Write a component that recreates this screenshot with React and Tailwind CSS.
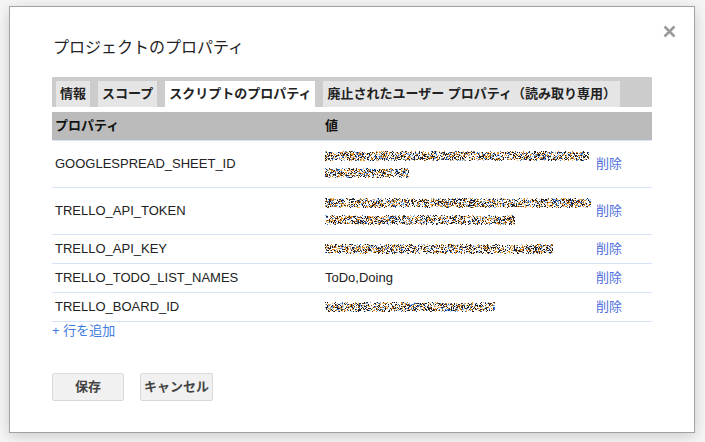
import React from 'react';

const jp = { fontFamily: '"Liberation Sans", Arial, "Noto Sans CJK JP", sans-serif' };

// deterministic noise standing in for the masked values
const rng = (seed) => {
    let s = seed;
    return () => {
        s = (s * 16807) % 2147483647;
        return (s - 1) / 2147483646;
    };
};

const NOISE_COLORS = ['#15152e', '#e08a22', '#2f6fcf', '#8fb8ea', '#6b3f14', '#f0b860', '#222222', '#15152e', '#e08a22'];

const Noise = ({ width, height = 12, seed = 7 }) => {
    const r = rng(seed);
    const dots = [];
    for (let x = 0; x < width; x++) {
        for (let y = 1; y < height - 1; y++) {
            const edge = y === 1 || y === height - 2 ? 0.25 : 0.55;
            if (r() < edge) {
                const c = NOISE_COLORS[Math.floor(r() * NOISE_COLORS.length)];
                dots.push(<rect key={x + '-' + y} x={x} y={y} width="1" height="1" fill={c} />);
            }
        }
    }
    return (
        <svg width={width} height={height} className="block">
            {dots}
        </svg>
    );
};

const rows = [
    { name: 'GOOGLESPREAD_SHEET_ID', lines: [264, 84], tall: true },
    { name: 'TRELLO_API_TOKEN', lines: [266, 190], tall: true },
    { name: 'TRELLO_API_KEY', lines: [228] },
    { name: 'TRELLO_TODO_LIST_NAMES', text: 'ToDo,Doing' },
    { name: 'TRELLO_BOARD_ID', lines: [170] },
];

const tabs = [
    { label: '情報' },
    { label: 'スコープ' },
    { label: 'スクリプトのプロパティ', active: true },
    { label: '廃止されたユーザー プロパティ（読み取り専用）' },
];

export default function App() {
    return (
        <div className="h-[442px] w-[705px] bg-[#f6f6f6] pl-[9px] pt-[6px]" style={jp}>
            <div className="relative h-[427px] w-[686px] border border-[#a2a2a2] bg-white px-[42px] shadow-[0_3px_14px_rgba(0,0,0,0.18)]">
                <button className="absolute right-[16px] top-[16px] p-[2px]">
                    <svg width="13" height="13" viewBox="0 0 13 13">
                        <path d="M1.5 1.5 L11.5 11.5 M11.5 1.5 L1.5 11.5" stroke="#9a9a9a" strokeWidth="2.6" />
                    </svg>
                </button>

                <h1 className="pl-[1px] pt-[31px] text-[16px] font-normal leading-[20px] text-[#222]">
                    プロジェクトのプロパティ
                </h1>

                <div className="mt-[19px] flex h-[30px] items-end gap-[8px] bg-[#cccccc] px-[4px]">
                    {tabs.map((t) => (
                        <div
                            key={t.label}
                            className={
                                'flex h-[26px] items-center px-[4px] text-[13px] font-bold text-[#222] ' +
                                (t.active ? 'bg-white' : 'bg-[#e5e5e5]')
                            }
                        >
                            {t.label}
                        </div>
                    ))}
                </div>

                <div className="mt-[5px] flex h-[29px] items-center border-b border-[#d4e3f5] bg-[#bbbbbb] text-[13px] font-bold text-[#111]">
                    <div className="w-[273px] pl-[3px]">プロパティ</div>
                    <div className="pl-0">値</div>
                </div>

                {rows.map((row, i) => (
                    <div
                        key={row.name}
                        className={
                            'flex items-center border-b border-[#d4e3f5] text-[13px] text-[#222] ' +
                            (row.tall ? 'h-[47px]' : 'h-[29px]')
                        }
                    >
                        <div className="w-[273px] pl-[3px]">{row.name}</div>
                        <div className="flex w-[271px] flex-col gap-[5px]">
                            {row.text ? (
                                <span>{row.text}</span>
                            ) : (
                                row.lines.map((w, j) => <Noise key={j} width={w} seed={i * 31 + j * 7 + 3} />)
                            )}
                        </div>
                        <a className="text-[13px] text-[#5070dc]">削除</a>
                    </div>
                ))}

                <div className="mt-[1px] text-[13px] leading-[16px] text-[#3d7be0]">+ 行を追加</div>

                <div className="mt-[34px] flex gap-[16px]">
                    <button className="h-[28px] w-[72px] rounded-[2px] border border-[#d9d9d9] bg-[#f1f1f1] text-[13px] font-semibold text-[#444]">
                        保存
                    </button>
                    <button className="h-[28px] w-[73px] rounded-[2px] border border-[#d9d9d9] bg-[#f1f1f1] text-[13px] font-semibold text-[#444]">
                        キャンセル
                    </button>
                </div>
            </div>
        </div>
    );
}
